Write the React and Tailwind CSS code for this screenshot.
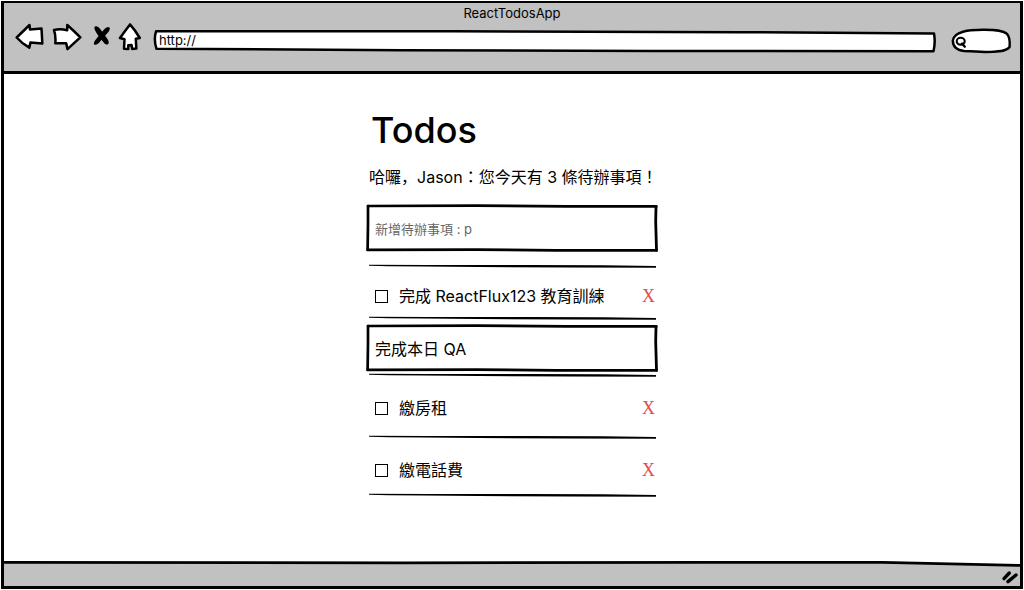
import React from "react";

const latin =
  "font-['Inter','Noto_Sans_CJK_TC',sans-serif]";

function IconButton({ label, className, viewBox, children }) {
  return (
    <button type="button" aria-label={label} className={`h-7 shrink-0 cursor-pointer ${className}`}>
      <svg
        viewBox={viewBox}
        className="block h-full w-full"
        fill="white"
        stroke="black"
        strokeWidth="2.5"
        strokeLinejoin="round"
        strokeLinecap="round"
        aria-hidden="true"
      >
        {children}
      </svg>
    </button>
  );
}

function Rule() {
  return (
    <svg viewBox="0 0 288 4" preserveAspectRatio="none" className="ml-[3px] block h-1 w-[287px]" aria-hidden="true">
      <path d="M0 0.8 L60 0.9 L160 1 L235 1.2 L288 2.1 V3.7 L200 3.4 L110 3 L55 2.6 L20 2.2 L0 1.8 Z" />
    </svg>
  );
}

function SketchInput({ label, className, ...props }) {
  return (
    <div className="relative h-12">
      <svg
        viewBox="0 0 292 48"
        preserveAspectRatio="none"
        className="pointer-events-none absolute inset-0 h-full w-full"
        fill="none"
        stroke="black"
        strokeLinejoin="round"
        strokeLinecap="round"
        aria-hidden="true"
      >
        <path strokeWidth="2.7" d="M2 2 L110 1.7 L200 2.3 L290.3 2.4" />
        <path strokeWidth="2.8" d="M290 2.5 L289.7 18 L290.5 46.3" />
        <path strokeWidth="2.8" d="M290.5 46.4 L190 46.3 L110 45.6 L1.6 45.8" />
        <path strokeWidth="2.7" d="M2 2 L2 20 L1.6 45.8" />
      </svg>
      <input aria-label={label} className={`h-full w-full bg-transparent px-[9px] outline-none ${className}`} {...props} />
    </div>
  );
}

function TodoItem({ id, title, className }) {
  return (
    <div className={`flex items-center pr-[3px] pl-[9px] ${className}`}>
      <input
        id={id}
        type="checkbox"
        className="h-[13px] w-[13px] shrink-0 appearance-none border border-black bg-white checked:bg-black"
      />
      <label htmlFor={id} className="ml-[11px] grow text-base leading-6">
        {title}
      </label>
      <button
        type="button"
        aria-label={`刪除 ${title}`}
        className="cursor-pointer font-['Liberation_Serif',serif] text-lg leading-6 text-[#e84848]"
      >
        X
      </button>
    </div>
  );
}

export default function App() {
  return (
    <div className={`flex min-h-screen flex-col bg-white p-px text-black ${latin}`}>
      <div className="flex grow flex-col border-[3px] border-t-2 border-black">
        <header className="h-[71px] border-b-[3px] border-black bg-[#c1c1c1]">
          <h2 className="text-center text-[13px] leading-5">ReactTodosApp</h2>
          <div className="flex items-start pr-2 pl-[11px]">
            <IconButton label="上一頁" className="w-[29px]" viewBox="15 23 29 28">
              <path d="M16.7 37.5 L29.5 25 L30 29.6 L41.5 28.6 Q42 36 42.3 43.5 L30.5 42.4 L29.3 47.7 Q22 43.5 16.7 37.5 Z" />
            </IconButton>
            <IconButton label="下一頁" className="ml-2 w-[30px]" viewBox="52 23 30 28">
              <path d="M54 30 Q60 28.5 67.2 30.2 L67.3 25 Q74 31 80.3 37.3 L67.5 49.2 L66.2 43.2 L55.3 43.3 Q56 36 54 30 Z" />
            </IconButton>
            <IconButton label="停止" className="ml-[10px] w-5" viewBox="92 23 20 28">
              <g fill="black" stroke="none">
                <path d="M94.8 26.6 Q97.5 25.2 100.2 29 Q103.5 33.5 106.8 38 Q109.8 42 108.2 44 Q105.8 46 102.8 41.5 L97.3 34.2 Q93.2 28.4 94.8 26.6 Z" />
                <path d="M109.5 27.4 Q107 25.8 104 29.5 L97.2 37.8 Q93 42.6 94 44.4 Q97 45.8 100.5 41 L107 33.5 Q110.8 29.5 109.5 27.4 Z" />
              </g>
            </IconButton>
            <IconButton label="首頁" className="ml-[6px] w-6" viewBox="118 23 24 28">
              <path d="M130 24.4 Q135 30 139.8 38 L135.8 38.8 L136.3 48.6 L132.2 49 L131.5 45 L128.3 45.3 L128.3 49.1 L124 48.8 L124.5 39.2 L120 38 Q124.5 31.5 130 24.4 Z" />
            </IconButton>
            <div className="relative mt-[6px] ml-[10px] h-6 grow">
              <svg viewBox="0 0 786 24" preserveAspectRatio="none" className="absolute inset-0 h-full w-full" aria-hidden="true">
                <path
                  fill="white"
                  stroke="black"
                  strokeWidth="2.5"
                  strokeLinejoin="round"
                  d="M4 2.3 L300 2.3 L590 3.2 L783 4.4 Q784.6 13 782.5 22.2 L500 22 L250 21.2 L4.5 19.8 Q1.5 11 4 2.3 Z"
                />
              </svg>
              <input
                aria-label="網址"
                defaultValue="http://"
                className="relative block h-[22px] w-full bg-transparent px-[7px] text-[13px] outline-none"
              />
            </div>
            <div className="relative mt-[5px] ml-[13px] h-[26px] w-[62px] shrink-0">
              <svg viewBox="950 28 62 26" className="absolute inset-0 h-full w-full" strokeLinecap="round" aria-hidden="true">
                <path
                  fill="white"
                  stroke="black"
                  strokeWidth="2.4"
                  d="M952.8 40.5 C954 31 969 29.7 983 29.7 C995 29.6 1004 31 1007 33.8 C1009.5 37 1010 42 1009.6 47 C1006 52 994 52 985 52 C978 51.5 970 51.2 964 51 C956 50 952.8 46 952.8 40.5 Z"
                />
                <ellipse cx="960.7" cy="41.2" rx="4" ry="3.4" fill="none" stroke="black" strokeWidth="2.1" />
                <path d="M962 43.5 L964.8 46.7" stroke="black" strokeWidth="2.3" />
              </svg>
              <input type="search" aria-label="搜尋" className="relative block h-full w-full bg-transparent pr-2 pl-[18px] text-xs outline-none" />
            </div>
          </div>
        </header>

        <main className="mx-auto w-[292px] grow pt-8 pb-10">
          <h1 className="ml-[5px] text-[36px] leading-[48px] font-medium">Todos</h1>
          <p className="mt-[10px] ml-[3px] text-base leading-6 whitespace-nowrap">
            哈囉<span className="font-['Noto_Sans_CJK_JP',sans-serif]">，</span>Jason：您今天有 3 條待辦事項！
          </p>
          <div className="mt-[15px] mb-3">
            <SketchInput
              label="新增待辦事項"
              placeholder="新增待辦事項 : p"
              className="pt-[2px] text-[13px] placeholder:text-[#666666]"
            />
          </div>
          <Rule />
          <TodoItem id="todo-1" title="完成 ReactFlux123 教育訓練" className="h-12 pt-2" />
          <Rule />
          <div className="mt-1 mb-px">
            <SketchInput label="編輯待辦事項" defaultValue="完成本日 QA" className="text-base" />
          </div>
          <Rule />
          <TodoItem id="todo-2" title="繳房租" className="h-[58px] pt-1" />
          <Rule />
          <TodoItem id="todo-3" title="繳電話費" className="h-[54px] pt-2" />
          <Rule />
        </main>

        <footer className="relative flex h-[26px] items-end justify-end">
          <svg viewBox="0 0 1018 26" preserveAspectRatio="none" className="absolute inset-0 h-full w-full" aria-hidden="true">
            <path fill="#c1c1c1" d="M0 2.4 L400 2.8 L700 2.4 L880 2.4 L1018 5.4 V26 H0 Z" />
            <path fill="none" stroke="black" strokeWidth="2.8" d="M0 2.4 L400 2.8 L700 2.4 L880 2.4 L1018 5.4" />
          </svg>
          <svg
            viewBox="1000 569 20 17"
            className="relative h-[17px] w-5"
            stroke="black"
            strokeWidth="3.4"
            strokeLinecap="round"
            fill="none"
            aria-hidden="true"
          >
            <path d="M1004 578.6 L1009.3 573" />
            <path d="M1008 581.6 L1016 575" />
          </svg>
        </footer>
      </div>
    </div>
  );
}
